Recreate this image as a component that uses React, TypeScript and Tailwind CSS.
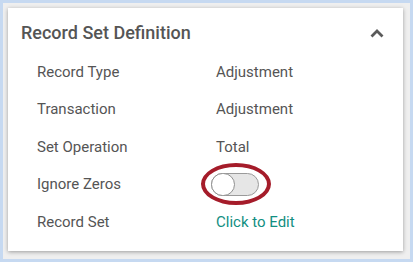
import React from "react";

const rows: { label: string; value?: string; kind?: "toggle" | "link" }[] = [
  { label: "Record Type", value: "Adjustment" },
  { label: "Transaction", value: "Adjustment" },
  { label: "Set Operation", value: "Total" },
  { label: "Ignore Zeros", kind: "toggle" },
  { label: "Record Set", value: "Click to Edit", kind: "link" },
];

export default function App() {
  return (
    <div
      className="w-[413px] h-[262px] bg-[#c6d9f1] p-[3px]"
      style={{ fontFamily: "Roboto, 'Liberation Sans', sans-serif" }}
    >
      <div className="w-full h-full bg-[#efefef] pt-[5px] pl-[5px] pr-[7px] pb-[8px]">
        <div className="w-full h-full bg-white shadow-[0_1px_4px_rgba(0,0,0,0.35)] flex flex-col">
          <div className="flex items-center justify-between pl-[13px] pr-[18px] pt-[6px] h-[38px] box-content">
            <span className="text-[18px] leading-[24px] font-medium text-[#555555]">
              Record Set Definition
            </span>
            <svg width="16" height="10" viewBox="0 0 16 10">
              <path d="M2.5 8.5 L8 3 L13.5 8.5" fill="none" stroke="#5a5a5a" strokeWidth="2.8" />
            </svg>
          </div>
          <div className="flex flex-col pl-[29px] mt-[1px]">
            {rows.map((r) => (
              <div key={r.label} className="flex items-center h-[37.5px]">
                <div className="w-[179px] text-[15px] text-[#555555]">{r.label}</div>
                {r.kind === "toggle" ? (
                  <div className="relative ml-[-5px]">
                    <div className="w-[48px] h-[23px] rounded-full bg-[#e6e6e6] border border-[#9a9a9a] relative">
                      <div className="absolute left-[-1px] top-[-1px] w-[24px] h-[23px] rounded-full bg-white border border-[#8f8f8f]" />
                    </div>
                    <div className="absolute left-[-10px] top-[-10px] w-[70px] h-[42px] rounded-[50%] border-[4px] border-[#a51c2a]" />
                  </div>
                ) : (
                  <div
                    className={
                      r.kind === "link"
                        ? "text-[15px] text-[#128f82]"
                        : "text-[15px] text-[#555555]"
                    }
                  >
                    {r.value}
                  </div>
                )}
              </div>
            ))}
          </div>
        </div>
      </div>
    </div>
  );
}
